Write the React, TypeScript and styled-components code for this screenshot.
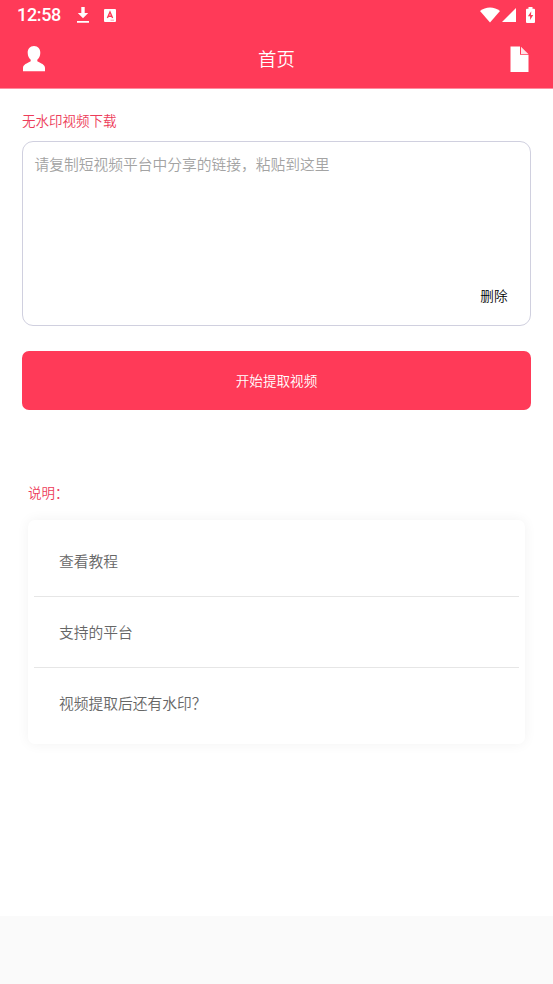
import React from "react";
import styled, { createGlobalStyle } from "styled-components";

const ACCENT = "#ff3a58";

const GlobalStyle = createGlobalStyle`
  * { box-sizing: border-box; }
  body {
    margin: 0;
    background: #fafafa;
    font-family: "Noto Sans CJK SC", "Noto Sans", sans-serif;
    font-weight: 350;
  }
  button { font-family: inherit; font-weight: inherit; border: 0; padding: 0; background: none; }
`;

const Screen = styled.div`
  height: 984px;
  display: flex;
  flex-direction: column;
  overflow: hidden;
`;

const Header = styled.header`
  height: 89px;
  flex: none;
  background: ${ACCENT};
  background-clip: padding-box;
  border-bottom: 1px solid #ff8c9e;
  color: #fff;
`;

const StatusBar = styled.div`
  height: 30px;
  display: flex;
  align-items: center;
  justify-content: space-between;
  padding: 0 18px 0 17px;
`;

const StatusGroup = styled.div`
  display: flex;
  align-items: center;
`;

const Clock = styled.span`
  width: 60px;
  font: 500 18px/30px Roboto, sans-serif;
  letter-spacing: -0.35px;
`;

const Glyph = styled.svg<{ $gap?: number }>`
  display: block;
  flex: none;
  margin-left: ${({ $gap = 0 }) => $gap}px;
`;

const NavBar = styled.nav`
  height: 57px;
  display: grid;
  grid-template-columns: 40px 1fr 40px;
  align-items: center;
  padding: 0 22px;
`;

const NavTitle = styled.h1`
  margin: 0;
  font-size: 18.4px;
  line-height: 28px;
  font-weight: inherit;
  text-align: center;
  padding-bottom: 1px;
`;

const NavButton = styled.button<{ $end?: boolean }>`
  display: flex;
  justify-content: ${({ $end }) => ($end ? "flex-end" : "flex-start")};
  color: #fff;
`;

const Content = styled.main`
  height: 827px;
  flex: none;
  background: #fff;
  padding: 21px 22px 0;
`;

const SectionLabel = styled.h2<{ $indent?: number }>`
  margin: 0;
  padding-left: ${({ $indent = 0 }) => $indent}px;
  font-size: 13.5px;
  line-height: 20px;
  font-weight: inherit;
  color: #ed3c5a;
`;

const LinkBox = styled.div`
  height: 185px;
  margin-top: 11px;
  padding: 11px 22.5px 20px 11.5px;
  display: flex;
  flex-direction: column;
  justify-content: space-between;
  border: 1px solid #d0d0df;
  border-radius: 11px;
`;

const Placeholder = styled.span`
  font-size: 14.75px;
  line-height: 22px;
  color: #a3a3a3;
`;

const DeleteButton = styled.button`
  align-self: flex-end;
  font-size: 13.6px;
  line-height: 20px;
  color: #000;
`;

const SubmitButton = styled.button`
  display: block;
  width: 100%;
  height: 59px;
  margin: 25px 0 72px;
  padding-bottom: 1px;
  border-radius: 7px;
  background: ${ACCENT};
  color: #fff;
  font-size: 13.6px;
  line-height: 20px;
`;

const Card = styled.ul`
  list-style: none;
  height: 224px;
  margin: 18px 6px 0;
  padding: 6px;
  border-radius: 7px;
  background: #fff;
  box-shadow: 0 0 13px rgba(0, 0, 0, 0.055);
`;

const CardRow = styled.li`
  height: 70px;
  padding: 0 25px;
  font-size: 14.75px;
  line-height: 70px;
  color: #666;

  & + & {
    height: 71px;
    border-top: 1px solid #e6e6e6;
  }
`;

const helpTopics = ["查看教程", "支持的平台", "视频提取后还有水印？"];

export default function App() {
  return (
    <Screen>
      <GlobalStyle />
      <Header>
        <StatusBar>
          <StatusGroup>
            <Clock>12:58</Clock>
            <Glyph width="12" height="16" viewBox="0 0 12 16" fill="#fff">
              <path d="M4.3 0h3.4v6h3.5L6 11.3.8 6h3.5zM0 14h12v1.8H0z" />
            </Glyph>
            <Glyph $gap={15} width="12" height="13" viewBox="0 0 12 13">
              <rect width="12" height="13" rx="1" fill="#fff" />
              <path d="M3.4 9 6 3l2.6 6M4.3 7.2h3.4" fill="none" stroke={ACCENT} strokeWidth="1.4" />
              <path d="M6.5 11.2h3.5" stroke={ACCENT} strokeWidth=".5" />
            </Glyph>
          </StatusGroup>
          <StatusGroup>
            <Glyph width="20" height="16" viewBox="0 0 20 16" fill="#fff">
              <path d="M0 4C5.5-.8 14.5-.8 20 4L10 15.5z" />
            </Glyph>
            <Glyph $gap={2} width="14" height="14" viewBox="0 0 14 14" fill="#fff">
              <path d="M14 0v14H0z" />
            </Glyph>
            <Glyph $gap={10} width="9" height="16" viewBox="0 0 9 16">
              <path d="M2.5 0h4v1.7H8q1 0 1 1V15q0 1-1 1H1q-1 0-1-1V2.700q0-1 1-1h1.500z" fill="#fff" />
              <path d="M5.3 4.3 1.9 9.300h2.200v3.800L7.200 8H5z" fill={ACCENT} />
            </Glyph>
          </StatusGroup>
        </StatusBar>
        <NavBar>
          <NavButton aria-label="我的">
            <Glyph width="24" height="26" viewBox="0 0 24 26" fill="currentColor">
              <path d="M12 0C8 0 5.500 3 5.700 7c.1 3 1.300 5.400 3 6.800v1.400C5 17.300 1 18.500 1 22v3.300h22V22c0-3.500-4-4.700-7.700-6.800v-1.400c1.700-1.400 2.900-3.800 3-6.800C18.500 3 16 0 12 0z" />
            </Glyph>
          </NavButton>
          <NavTitle>首页</NavTitle>
          <NavButton $end aria-label="文档">
            <Glyph width="21" height="26" viewBox="0 0 21 26" fill="currentColor">
              <path d="M.5 .5H10v8.200h8.500V26H.5z" />
              <path d="M11 .8 18.300 7.900H11z" opacity=".85" />
            </Glyph>
          </NavButton>
        </NavBar>
      </Header>
      <Content>
        <SectionLabel>无水印视频下载</SectionLabel>
        <LinkBox>
          <Placeholder>请复制短视频平台中分享的链接，粘贴到这里</Placeholder>
          <DeleteButton>删除</DeleteButton>
        </LinkBox>
        <SubmitButton>开始提取视频</SubmitButton>
        <SectionLabel $indent={6}>说明：</SectionLabel>
        <Card>
          {helpTopics.map((topic) => (
            <CardRow key={topic}>{topic}</CardRow>
          ))}
        </Card>
      </Content>
    </Screen>
  );
}
